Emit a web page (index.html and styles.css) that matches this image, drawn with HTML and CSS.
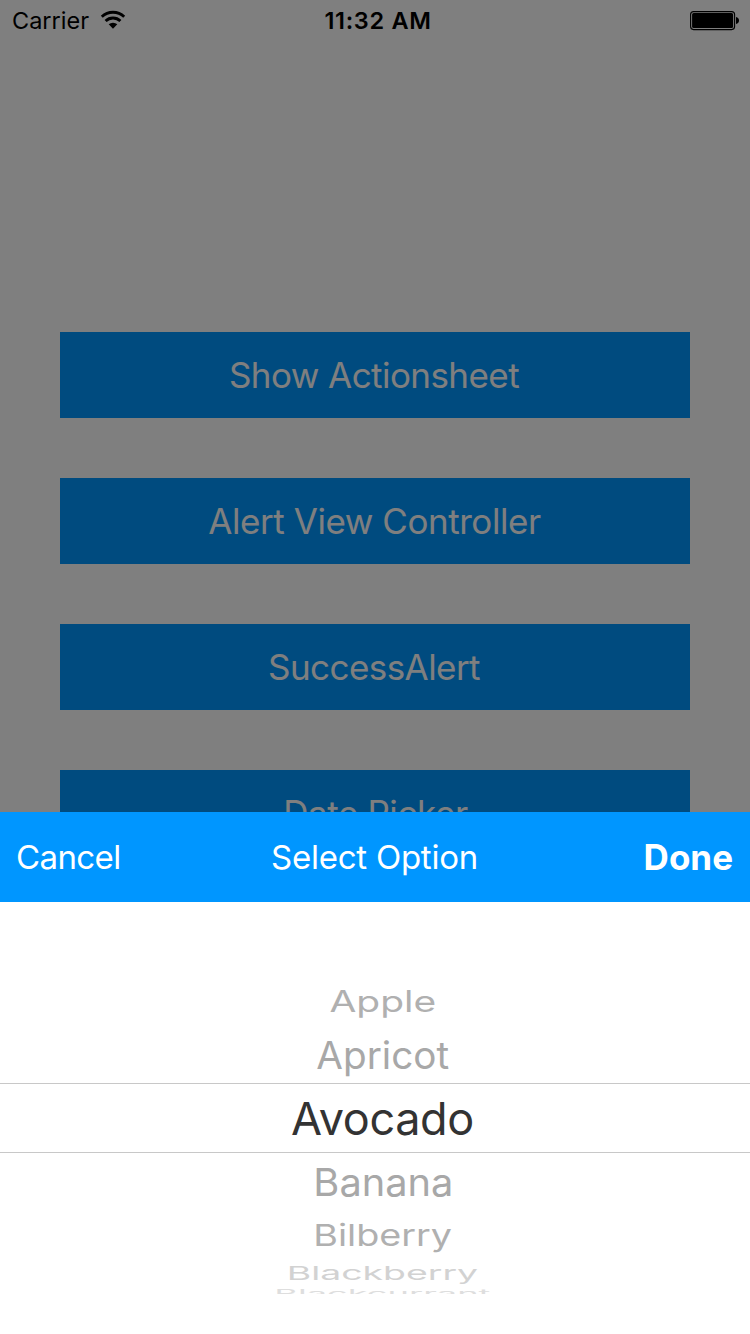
FILE: index.html
```html
<!DOCTYPE html>
<html lang="en">
<head>
<meta charset="utf-8">
<title>Select Option</title>
<link rel="stylesheet" href="styles.css">
</head>
<body>
<div class="screen">
  <header class="status">
    <div class="status-left">
      <span class="carrier">Carrier</span>
      <svg class="wifi" width="26" height="20" viewBox="0 0 26 20">
        <path d="M1.8 6.7 A16.5 16.5 0 0 1 24.2 6.7" fill="none" stroke="#000" stroke-width="2.9"/>
        <path d="M5.6 11 A10.6 10.6 0 0 1 20.4 11" fill="none" stroke="#000" stroke-width="2.9"/>
        <path d="M8.7 14.3 A6.4 6.4 0 0 1 17.3 14.3 L13 18.7 Z"/>
      </svg>
    </div>
    <span class="time">11:32 AM</span>
    <svg class="battery" width="50" height="20" viewBox="0 0 50 20">
      <rect x=".6" y=".6" width="44" height="18" rx="3" fill="none" stroke="#000" stroke-width="1.1"/>
      <rect x="2.1" y="2.1" width="41" height="15" rx="1.6"/>
      <path d="M46 6 Q49 6.6 49 9.5 Q49 12.4 46 13 Z"/>
    </svg>
  </header>
  <main class="actions">
    <button class="action t1">Show Actionsheet</button>
    <button class="action t2">Alert View Controller</button>
    <button class="action t1">SuccessAlert</button>
    <button class="action t3">Date Picker</button>
  </main>
  <div class="dim"></div>
  <section class="sheet">
    <div class="toolbar">
      <span class="cancel">Cancel</span>
      <span class="title">Select Option</span>
      <span class="done">Done</span>
    </div>
    <div class="picker">
      <div class="row apple"><span>Apple</span></div>
      <div class="row apricot"><span>Apricot</span></div>
      <div class="row selected"><span>Avocado</span></div>
      <div class="row banana"><span>Banana</span></div>
      <div class="row bilberry"><span>Bilberry</span></div>
      <div class="row blackberry"><span>Blackberry</span></div>
      <div class="row blackcurrant"><span>Blackcurrant</span></div>
    </div>
  </section>
</div>
</body>
</html>
```
FILE: styles.css
```css
* { box-sizing: border-box; }
body { margin: 0; background: #fff; font-family: Inter, "Liberation Sans", sans-serif; }
.screen { position: relative; width: 750px; height: 1334px; overflow: hidden; background: #fff; }

.status {
  display: grid;
  grid-template-columns: 1fr auto 1fr;
  height: 40px;
  padding: 0 10px 0 12px;
  font-size: 23.5px;
  line-height: 41px;
  color: #000;
}
.status-left { display: flex; }
.wifi { margin: 10px 0 0 11px; }
.time { font-weight: 600; letter-spacing: .68px; padding-left: 4px; }
.battery { justify-self: end; margin: 11px 0 0; }

.actions { display: flex; flex-direction: column; gap: 60px; padding: 292px 60px 0; }
.action {
  height: 86px;
  border: 0;
  padding: 0 2px 0 0;
  background: #0096ff;
  color: #fff;
  font: 400 35px/86px Inter, "Liberation Sans", sans-serif;
}
.t1 { letter-spacing: -.57px; }
.t2 { letter-spacing: -.45px; padding-right: 1px; }
.t3 { letter-spacing: -.4px; padding: 0 0 0 1px; }

.dim { position: absolute; inset: 0; background: rgba(0, 0, 0, .5); }

.sheet { position: absolute; left: 0; right: 0; bottom: 0; height: 522px; background: #fff; }
.toolbar {
  display: grid;
  grid-template-columns: 1fr auto 1fr;
  height: 90px;
  padding: 0 17px 0 16px;
  background: #0096ff;
  color: #fff;
  font-size: 33px;
  line-height: 90px;
}
.cancel { letter-spacing: -.6px; }
.title { letter-spacing: -.24px; }
.done { justify-self: end; font-size: 35px; font-weight: 700; line-height: 91px; }

.picker { padding-top: 72px; color: #a8a8a8; font-size: 40px; }
.row { display: flex; justify-content: center; align-items: center; padding-left: 16px; }
.row span { display: block; line-height: 48px; white-space: nowrap; }
.apple { height: 54px; padding-top: 2px; color: #b0b0b0; }
.apple span { transform: scale(.974, .73); }
.apricot { height: 55px; padding-top: 1px; }
.apricot span { transform: scale(.967, .95); }
.selected {
  height: 70px;
  padding: 2px 0 0 15px;
  border-top: 1px solid #c8c8c8;
  border-bottom: 1px solid #c8c8c8;
  color: #333;
  font-size: 45px;
  letter-spacing: -.35px;
}
.banana { height: 56px; padding-top: 2px; }
.banana span { transform: scale(.995, .97); }
.bilberry { height: 52px; color: #b0b0b0; }
.bilberry span { transform: scale(.943, .75); }
.blackberry { height: 24px; padding-left: 15px; color: #d2d2d2; }
.blackberry span { transform: scale(.935, .48); }
.blackcurrant { height: 9px; overflow: hidden; align-items: flex-start; padding-left: 15px; color: #dedede; }
.blackcurrant span { line-height: 18px; transform: scale(.906, .28); }
```
